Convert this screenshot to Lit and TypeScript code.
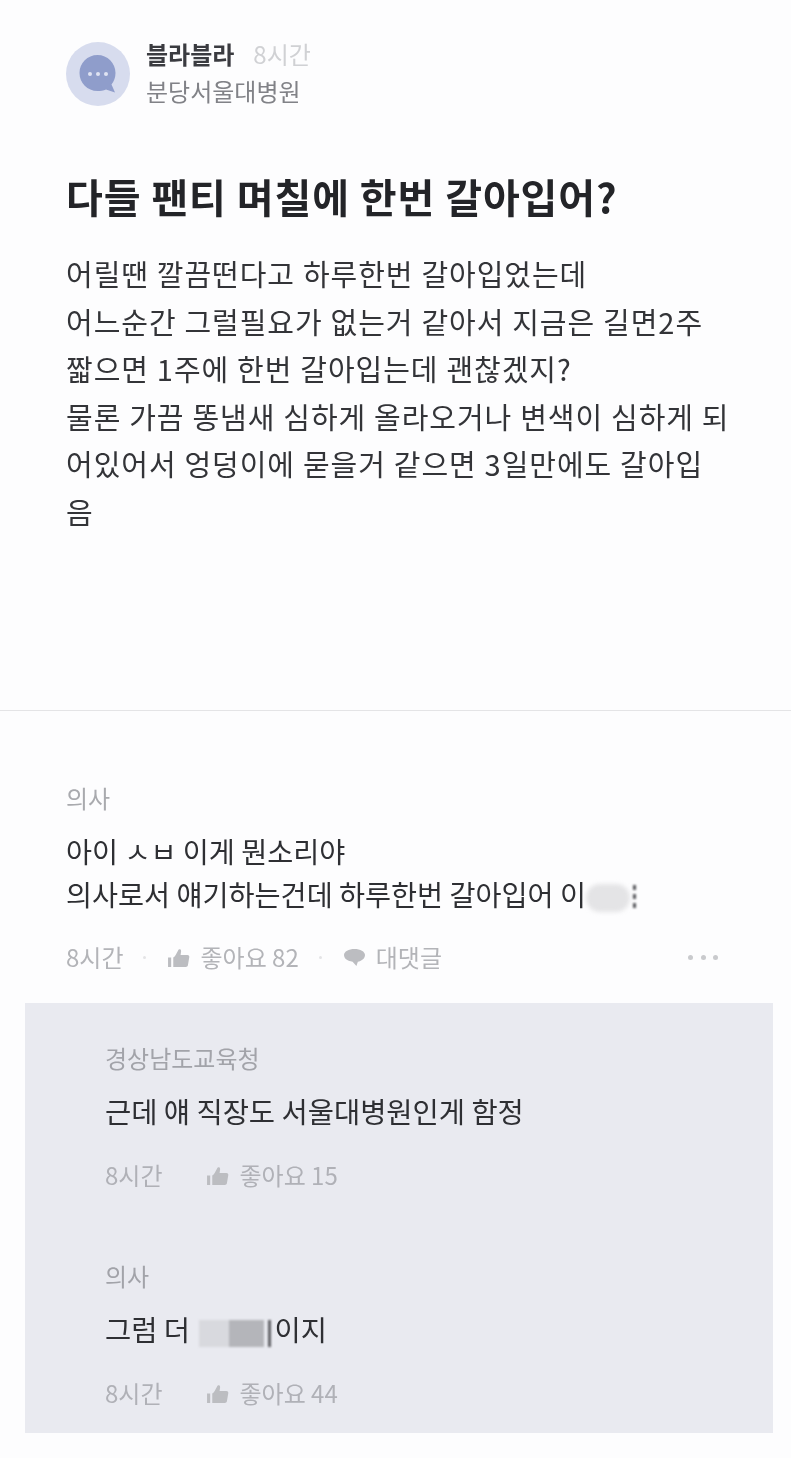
import { LitElement, html, css, svg } from "lit";
import { customElement } from "lit/decorators.js";

const thumb = svg`<svg class="ico" viewBox="0 0 22 20"><path fill="currentColor" d="M1 10h3v9H1zM6 10c2-1 3-4 4.500-6.500C11.500 1.500 13.500 2 13.500 4l-.5 3.500h6.500c1.500 0 2 1 1.800 2.200L20 17.500c-.2 1-1 1.500-2 1.500H6z"/></svg>`;

const bubble = svg`<svg class="ico" viewBox="0 0 24 22"><path fill="currentColor" d="M12 2c6 0 11 2.500 11 6.500S19 15 15.500 15.500L14 20l-4-4.600C5 15 1 12.500 1 8.500S6 2 12 2z"/></svg>`;

@customElement("app-root")
export class AppRoot extends LitElement {
  static styles = css`
    :host {
      display: block;
      width: 791px;
      height: 1458px;
      overflow: hidden;
      background: #fdfdfe;
      color: #26272b;
      font-family: "Noto Sans CJK KR", "Noto Sans", sans-serif;
      filter: blur(0.5px);
    }

    .post {
      height: 711px;
      box-sizing: border-box;
      padding: 42px 0 0 66px;
      border-bottom: 1px solid #e4e4e6;
    }

    .author {
      display: flex;
      align-items: flex-start;
      gap: 16px;
    }

    .avatar {
      width: 64px;
      height: 64px;
      flex: none;
    }

    .who {
      margin-top: -3px;
    }

    .name-row {
      display: flex;
      align-items: baseline;
      gap: 19px;
      line-height: 30px;
    }

    .name {
      font-size: 24px;
      font-weight: 700;
      color: #3a3b40;
    }

    .when {
      font-size: 24px;
      color: #d0d1d4;
    }

    .org {
      font-size: 24px;
      line-height: 36px;
      margin-top: 4px;
      color: #818287;
    }

    h1 {
      margin: 59px 0 0;
      font-size: 40px;
      line-height: 56px;
      font-weight: 700;
      letter-spacing: 0.900px;
      color: #232428;
    }

    .body {
      margin: 26px 0 0;
      font-size: 29px;
      line-height: 47.500px;
      letter-spacing: 0.950px;
      word-spacing: 0.500px;
      color: #333438;
      white-space: nowrap;
    }

    .comment {
      padding: 70px 66px 0;
    }

    .job {
      font-size: 24px;
      line-height: 34px;
      color: #a9aaae;
    }

    .text {
      font-size: 28.300px;
      line-height: 43px;
      color: #2e2f33;
      white-space: nowrap;
    }

    .comment .text {
      margin-top: 14px;
    }

    .meta {
      display: flex;
      align-items: center;
      font-size: 24px;
      line-height: 34px;
      color: #b3b4b8;
    }

    .comment .meta {
      margin-top: 25px;
    }

    .dot {
      width: 3px;
      height: 3px;
      border-radius: 50%;
      background: #e4e4e6;
      margin: 0 21px 0 20px;
    }

    .action {
      display: flex;
      align-items: center;
      gap: 10px;
    }

    .ico {
      width: 23px;
      height: 21px;
      color: #bcbdc1;
    }

    .more {
      margin-left: auto;
      margin-right: 7px;
      display: flex;
      gap: 7.500px;
    }

    .more i {
      width: 5px;
      height: 5px;
      border-radius: 50%;
      background: #c9cacd;
    }

    .replies {
      margin: 29px 18px 0 25px;
      height: 430px;
      box-sizing: border-box;
      padding: 38px 80px 0;
      background: #e9eaf0;
    }

    .replies .text {
      margin-top: 14px;
      font-size: 28.500px;
    }

    .replies .meta {
      margin-top: 26px;
      color: #b0b1b7;
    }

    .replies .job {
      color: #a2a3a9;
    }

    .reply + .reply {
      margin-top: 67px;
    }

    .reply .action {
      margin-left: 44px;
    }

    .blur {
      display: inline-block;
      vertical-align: middle;
    }

    .blur-a {
      width: 44px;
      height: 28px;
      border-radius: 14px;
      background: #e4e4e6;
      filter: blur(2px);
    }

    .rest {
      width: 3px;
      height: 26px;
      margin-left: 3px;
      background: repeating-linear-gradient(#55565a 0 5px, transparent 5px 9px);
      filter: blur(0.8px);
    }

    .blur-b {
      width: 72px;
      height: 27px;
      margin: 0 3px 0 3px;
      background: linear-gradient(90deg, #d8d9de 0 42%, #b4b5ba 42% 90%, #e9eaf0 90% 96%, #5f6065 96%);
      filter: blur(0.8px);
    }
  `;

  render() {
    return html`
      <section class="post">
        <div class="author">
          <svg class="avatar" viewBox="0 0 64 64">
            <circle cx="32" cy="32" r="32" fill="#d7dcee" />
            <path
              fill="#8f9dcb"
              d="M31.500 13c10 0 18 8 18 18 0 4.500-1.500 8.500-4 11.500l3.500 8-9-3c-2.500 1-5.500 1.500-8.500 1.500-10 0-18-8-18-18s8-18 18-18z"
            />
            <circle cx="24" cy="32" r="2" fill="#dfe3f2" />
            <circle cx="32" cy="32" r="2" fill="#dfe3f2" />
            <circle cx="40" cy="32" r="2" fill="#dfe3f2" />
          </svg>
          <div class="who">
            <div class="name-row">
              <span class="name">블라블라</span>
              <span class="when">8시간</span>
            </div>
            <div class="org">분당서울대병원</div>
          </div>
        </div>
        <h1>다들 팬티 며칠에 한번 갈아입어?</h1>
        <p class="body">
          어릴땐 깔끔떤다고 하루한번 갈아입었는데<br />
          어느순간 그럴필요가 없는거 같아서 지금은 길면2주<br />
          짧으면 1주에 한번 갈아입는데 괜찮겠지?<br />
          물론 가끔 똥냄새 심하게 올라오거나 변색이 심하게 되<br />
          어있어서 엉덩이에 묻을거 같으면 3일만에도 갈아입<br />
          음
        </p>
      </section>

      <section class="comment">
        <div class="job">의사</div>
        <div class="text">
          아이 ㅅㅂ 이게 뭔소리야<br />
          의사로서 얘기하는건데 하루한번 갈아입어 이<span class="blur blur-a"></span
          ><span class="blur rest"></span>
        </div>
        <div class="meta">
          <span>8시간</span>
          <span class="dot"></span>
          <span class="action">${thumb}<span>좋아요 82</span></span>
          <span class="dot"></span>
          <span class="action">${bubble}<span>대댓글</span></span>
          <span class="more"><i></i><i></i><i></i></span>
        </div>
      </section>

      <section class="replies">
        <div class="reply">
          <div class="job">경상남도교육청</div>
          <div class="text">근데 얘 직장도 서울대병원인게 함정</div>
          <div class="meta">
            <span>8시간</span>
            <span class="action">${thumb}<span>좋아요 15</span></span>
          </div>
        </div>
        <div class="reply">
          <div class="job">의사</div>
          <div class="text">그럼 더 <span class="blur blur-b"></span>이지</div>
          <div class="meta">
            <span>8시간</span>
            <span class="action">${thumb}<span>좋아요 44</span></span>
          </div>
        </div>
      </section>
    `;
  }
}
